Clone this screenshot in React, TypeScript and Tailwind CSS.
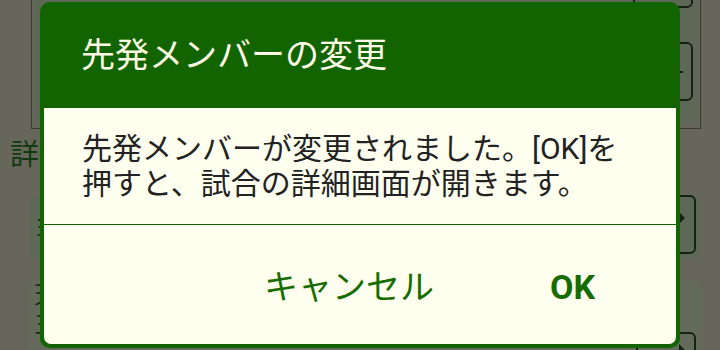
import React from "react";

export default function App() {
  return (
    <div
      className="relative w-[720px] h-[350px] overflow-hidden bg-[#66665a]"
      style={{ fontFamily: "Roboto, 'Noto Sans CJK JP', sans-serif" }}
    >
      {/* dimmed page behind the dialog */}
      <div className="flex flex-col">
        <div className="ml-[31px] w-[670px] h-[129px] border border-t-0 border-[#3c3c35] px-[2px] pb-[6px]">
          <div className="h-full bg-[#5e6856] flex flex-col items-end pr-[5px]">
            <div className="-mt-[12px] w-[60px] h-[20px] border-2 border-[#132313] rounded-[6px]" />
            <div className="mt-[34px] w-[60px] h-[59px] border-2 border-[#132313] rounded-[6px] flex items-center justify-end pr-[8px]">
              <div className="w-[6px] h-[2px] bg-[#132313]" />
            </div>
          </div>
        </div>
        <div className="ml-[10px] mt-[8px] text-[29px] leading-[36px] text-[#0f3a10]">詳細</div>
        <div className="mt-[24px] ml-[30px] w-[670px] h-[61px] bg-[#5e6856] flex items-center justify-between pr-[4px]">
          <span className="ml-[4px] text-[24px] text-[#1a2a1a]">ヨ</span>
          <div className="-mt-[6px] w-[60px] h-[59px] border-2 border-[#132313] rounded-[6px] flex items-center justify-end pr-[9px]">
            <div className="w-0 h-0 border-y-[6px] border-y-transparent border-l-[6px] border-l-[#132313] -mt-[14px]" />
          </div>
        </div>
        <div className="mt-[24px] ml-[30px] w-[670px] h-[80px] bg-[#636a5a] flex items-start justify-between pr-[4px]">
          <span className="ml-[4px] -mt-[2px] text-[24px] text-[#1a2a1a] leading-[30px]">天<br />三</span>
          <div className="mt-[50px] w-[60px] h-[59px] border-2 border-[#132313] rounded-[6px] flex justify-end pr-[9px] pt-[10px]">
            <div className="w-0 h-0 border-y-[6px] border-y-transparent border-l-[6px] border-l-[#132313]" />
          </div>
        </div>
      </div>

      {/* dialog */}
      <div className="absolute left-[40px] top-[2px] w-[640px] h-[346px] rounded-[10px] bg-[#126400] p-[4px] pt-0 flex flex-col">
        <div className="h-[106px] flex items-center pl-[37px] text-[34px] text-[#fffbe6]">
          先発メンバーの変更
        </div>
        <div className="flex-1 bg-[#fffff0] rounded-b-[7px] flex flex-col">
          <div className="h-[116px] flex items-center px-[38px] text-[30px] leading-[35px] text-[#222222]">
            <p>
              先発メンバーが変更されました。[OK]を
              <br />
              押すと、試合の詳細画面が開きます。
            </p>
          </div>
          <div className="h-px bg-[#126400]" />
          <div className="flex-1 flex items-center justify-end pt-[6px] text-[34px] text-[#176c00]">
            <span>キャンセル</span>
            <span className="ml-[116px] mr-[81px] font-bold">OK</span>
          </div>
        </div>
      </div>
    </div>
  );
}
